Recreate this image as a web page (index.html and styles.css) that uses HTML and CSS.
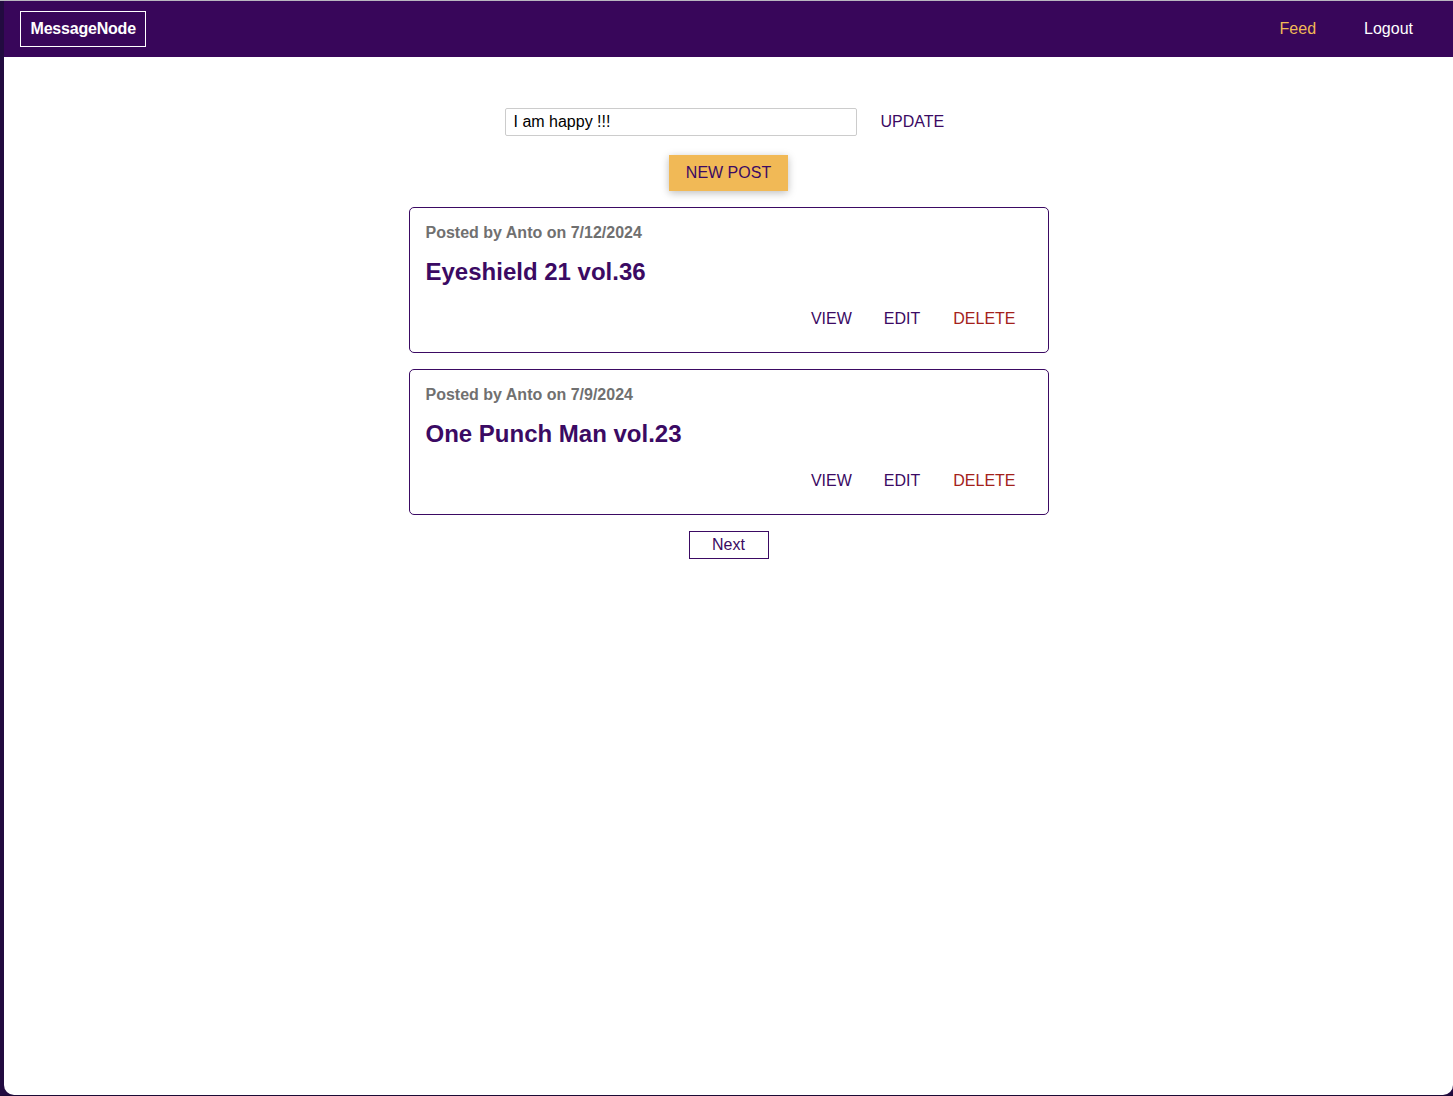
FILE: index.html
```html
<!DOCTYPE html>
<html lang="en">
<head>
<meta charset="utf-8">
<title>MessageNode</title>
<link rel="stylesheet" href="styles.css">
</head>
<body>
<div class="frame">
  <div class="window">
    <header class="main-header">
      <div class="logo">MessageNode</div>
      <nav class="nav">
        <a class="nav-item nav-item--active" href="#">Feed</a>
        <a class="nav-item" href="#">Logout</a>
      </nav>
    </header>
    <main class="feed">
      <form class="status-form">
        <input class="status-input" type="text" value="I am happy !!!">
        <button class="btn btn--flat btn--update" type="button">UPDATE</button>
      </form>
      <div class="control">
        <button class="btn btn--raised" type="button">NEW POST</button>
      </div>
      <section class="posts">
        <article class="post">
          <p class="post-meta">Posted by Anto on 7/12/2024</p>
          <h1 class="post-title">Eyeshield 21 vol.36</h1>
          <div class="post-actions">
            <button class="btn btn--flat" type="button">VIEW</button>
            <button class="btn btn--flat" type="button">EDIT</button>
            <button class="btn btn--flat btn--danger" type="button">DELETE</button>
          </div>
        </article>
        <article class="post">
          <p class="post-meta">Posted by Anto on 7/9/2024</p>
          <h1 class="post-title">One Punch Man vol.23</h1>
          <div class="post-actions">
            <button class="btn btn--flat" type="button">VIEW</button>
            <button class="btn btn--flat" type="button">EDIT</button>
            <button class="btn btn--flat btn--danger" type="button">DELETE</button>
          </div>
        </article>
      </section>
      <div class="paginator">
        <button class="paginator-control" type="button">Next</button>
      </div>
    </main>
  </div>
</div>
</body>
</html>
```

FILE: styles.css
```css
* { box-sizing: border-box; }

html, body {
  margin: 0;
  height: 1096px;
  overflow: hidden;
}

body {
  background: #1c0a36;
  font-family: "Liberation Sans", Arial, Helvetica, sans-serif;
  font-size: 16px;
}

.frame {
  border-top: 1px solid #b9b6c0;
  padding-left: 4px;
  height: 1095px;
  background: #220b40;
}

.window {
  height: 1094px;
  background: #ffffff;
  border-bottom-left-radius: 10px;
  border-bottom-right-radius: 10px;
  overflow: hidden;
}

.main-header {
  height: 56px;
  background: #38065a;
  display: flex;
  align-items: center;
  justify-content: space-between;
  padding: 0 16px;
}

.logo {
  border: 1px solid #ffffff;
  color: #ffffff;
  font-weight: bold;
  font-size: 16px;
  line-height: 18px;
  padding: 8px 9.5px;
  letter-spacing: -0.2px;
}

.nav {
  display: flex;
  align-items: center;
}

.nav-item {
  color: #ffffff;
  text-decoration: none;
  padding: 0 24px;
  font-size: 16px;
  line-height: 18px;
}

.nav-item--active {
  color: #f1b956;
}

.feed {
  padding-top: 51px;
}

.status-form {
  width: 480px;
  margin: 0 auto;
  padding-left: 16px;
  display: flex;
  align-items: center;
}

.status-input {
  width: 352px;
  height: 28px;
  border: 1px solid #cccccc;
  border-radius: 2px;
  padding: 0 8px;
  font: inherit;
  font-size: 16px;
  color: #000000;
  outline: none;
}

.btn {
  font: inherit;
  font-size: 16px;
  line-height: 18px;
  border: none;
  background: transparent;
  cursor: pointer;
  padding: 8px 16px;
  color: #3b0a63;
}

.btn--update {
  padding: 0 24px;
}

.btn--danger {
  color: #a3211b;
}

.control {
  display: flex;
  justify-content: center;
  margin-top: 19px;
}

.btn--raised {
  background: #f1b956;
  padding: 9px 17px;
  box-shadow: 0 2px 8px rgba(0, 0, 0, 0.26);
}

.posts {
  width: 640px;
  margin: 16px auto 0;
  display: flex;
  flex-direction: column;
  gap: 16px;
}

.post {
  border: 1px solid #3b0a63;
  border-radius: 5px;
  padding: 16px;
}

.post-meta {
  margin: 0;
  font-size: 16px;
  line-height: 18px;
  font-weight: bold;
  color: #707070;
}

.post-title {
  margin: 16px 0;
  font-size: 24px;
  line-height: 28px;
  font-weight: bold;
  color: #3b0a63;
}

.post-actions {
  display: flex;
  justify-content: flex-end;
  gap: 0;
}

.post-actions .btn--danger {
  margin-left: 1px;
}

.paginator {
  display: flex;
  justify-content: center;
  margin-top: 16px;
}

.paginator-control {
  width: 80px;
  padding: 4px 0;
  border: 1px solid #3b0a63;
  background: transparent;
  font: inherit;
  font-size: 16px;
  line-height: 18px;
  color: #3b0a63;
}
```
